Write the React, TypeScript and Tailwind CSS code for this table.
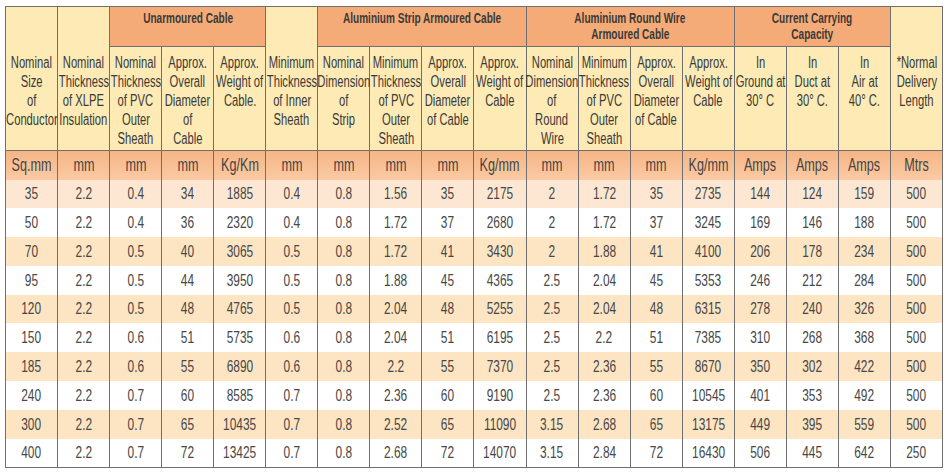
const font = { fontFamily: '"Liberation Sans", Arial, sans-serif' }

const spanHeads: Record<number, string[]> = {
  0: ['Nominal', 'Size', 'of', 'Conductor'],
  1: ['Nominal', 'Thickness', 'of XLPE', 'Insulation'],
  5: ['Minimum', 'Thickness', 'of Inner', 'Sheath'],
  17: ['*Normal', 'Delivery', 'Length'],
}

const groups = [
  { col: 2, span: 3, lines: ['Unarmoured Cable'] },
  { col: 6, span: 4, lines: ['Aluminium Strip Armoured Cable'] },
  { col: 10, span: 4, lines: ['Aluminium Round Wire', 'Armoured Cable'] },
  { col: 14, span: 3, lines: ['Current Carrying', 'Capacity'] },
]

const subHeads = [
  ['Nominal', 'Thickness', 'of PVC', 'Outer', 'Sheath'],
  ['Approx.', 'Overall', 'Diameter', 'of', 'Cable'],
  ['Approx.', 'Weight of', 'Cable.'],
  ['Nominal', 'Dimension', 'of', 'Strip'],
  ['Minimum', 'Thickness', 'of PVC', 'Outer', 'Sheath'],
  ['Approx.', 'Overall', 'Diameter', 'of Cable'],
  ['Approx.', 'Weight of', 'Cable'],
  ['Nominal', 'Dimension', 'of', 'Round', 'Wire'],
  ['Minimum', 'Thickness', 'of PVC', 'Outer', 'Sheath'],
  ['Approx.', 'Overall', 'Diameter', 'of Cable'],
  ['Approx.', 'Weight of', 'Cable'],
  ['In', 'Ground at', '30° C'],
  ['In', 'Duct at', '30° C.'],
  ['In', 'Air at', '40° C.'],
]

const units = ['Sq.mm', 'mm', 'mm', 'mm', 'Kg/Km', 'mm', 'mm', 'mm', 'mm', 'Kg/mm', 'mm', 'mm', 'mm', 'Kg/mm', 'Amps', 'Amps', 'Amps', 'Mtrs']

const rows = [
  ['35', '2.2', '0.4', '34', '1885', '0.4', '0.8', '1.56', '35', '2175', '2', '1.72', '35', '2735', '144', '124', '159', '500'],
  ['50', '2.2', '0.4', '36', '2320', '0.4', '0.8', '1.72', '37', '2680', '2', '1.72', '37', '3245', '169', '146', '188', '500'],
  ['70', '2.2', '0.5', '40', '3065', '0.5', '0.8', '1.72', '41', '3430', '2', '1.88', '41', '4100', '206', '178', '234', '500'],
  ['95', '2.2', '0.5', '44', '3950', '0.5', '0.8', '1.88', '45', '4365', '2.5', '2.04', '45', '5353', '246', '212', '284', '500'],
  ['120', '2.2', '0.5', '48', '4765', '0.5', '0.8', '2.04', '48', '5255', '2.5', '2.04', '48', '6315', '278', '240', '326', '500'],
  ['150', '2.2', '0.6', '51', '5735', '0.6', '0.8', '2.04', '51', '6195', '2.5', '2.2', '51', '7385', '310', '268', '368', '500'],
  ['185', '2.2', '0.6', '55', '6890', '0.6', '0.8', '2.2', '55', '7370', '2.5', '2.36', '55', '8670', '350', '302', '422', '500'],
  ['240', '2.2', '0.7', '60', '8585', '0.7', '0.8', '2.36', '60', '9190', '2.5', '2.36', '60', '10545', '401', '353', '492', '500'],
  ['300', '2.2', '0.7', '65', '10435', '0.7', '0.8', '2.52', '65', '11090', '3.15', '2.68', '65', '13175', '449', '395', '559', '500'],
  ['400', '2.2', '0.7', '72', '13425', '0.7', '0.8', '2.68', '72', '14070', '3.15', '2.84', '72', '16430', '506', '445', '642', '250'],
]

// the source uses a condensed face; squeeze Liberation Sans and keep it centred even when it overflows
function Narrow({ children, squeeze = 'scale-x-[0.7]' }: { children: React.ReactNode; squeeze?: string }) {
  return (
    <div className="flex justify-center">
      <span className={`shrink-0 whitespace-nowrap ${squeeze}`}>{children}</span>
    </div>
  )
}

function Lines({ lines, squeeze }: { lines: string[]; squeeze?: string }) {
  return (
    <>
      {lines.map((l, i) => (
        <Narrow key={i} squeeze={squeeze}>
          {l}
        </Narrow>
      ))}
    </>
  )
}

export default function App() {
  const topRow: React.ReactNode[] = []
  for (let c = 0; c < 18; c++) {
    if (spanHeads[c]) {
      topRow.push(
        <th
          key={`s${c}`}
          rowSpan={2}
          className="border border-[#6f6f6f] bg-[#fdeab5] px-0 pt-[46px] align-top text-[16px] font-normal leading-[19px] text-[#3a3a3a]"
        >
          <Lines lines={spanHeads[c]} />
        </th>
      )
    }
    const g = groups.find((x) => x.col === c)
    if (g) {
      topRow.push(
        <th
          key={`g${c}`}
          colSpan={g.span}
          className="border border-[#6f6f6f] bg-[#f5ab77] px-0 pt-[3px] align-top text-[15px] font-bold leading-[16px] text-[#3a3a3a]"
        >
          <Lines lines={g.lines} squeeze="scale-x-[0.67]" />
        </th>
      )
    }
  }

  return (
    <div className="min-h-[475px] bg-white pl-[5px] pt-[6px]" style={font}>
      <table className="w-[938px] table-fixed border-collapse border border-[#6f6f6f] text-center">
        <colgroup>
          {units.map((_, i) => (
            <col key={i} className="w-[52px]" />
          ))}
        </colgroup>
        <thead>
          <tr className="h-[40px]">{topRow}</tr>
          <tr className="h-[104px]">
            {subHeads.map((lines, i) => (
              <th
                key={i}
                className="border border-[#6f6f6f] bg-[#fdeab5] px-0 pt-[6px] align-top text-[16px] font-normal leading-[19px] text-[#3a3a3a]"
              >
                <Lines lines={lines} />
              </th>
            ))}
          </tr>
          <tr className="h-[29px] bg-gradient-to-b from-[#f6b585] to-[#fbcaa4]">
            {units.map((u, i) => (
              <th key={i} className="border-x border-t border-[#6f6f6f] p-0 text-[18px] font-normal text-[#444]">
                <Narrow>{u}</Narrow>
              </th>
            ))}
          </tr>
        </thead>
        <tbody>
          {rows.map((r, ri) => (
            <tr key={ri} className={`h-[28.8px] ${ri % 2 === 0 ? (ri === 0 ? 'bg-[#fde7d2]' : 'bg-[#fde4c3]') : 'bg-white'}`}>
              {r.map((v, ci) => (
                <td key={ci} className="border-x border-[#6f6f6f] p-0 text-[17px] text-[#474747]">
                  <Narrow>{v}</Narrow>
                </td>
              ))}
            </tr>
          ))}
        </tbody>
      </table>
    </div>
  )
}
